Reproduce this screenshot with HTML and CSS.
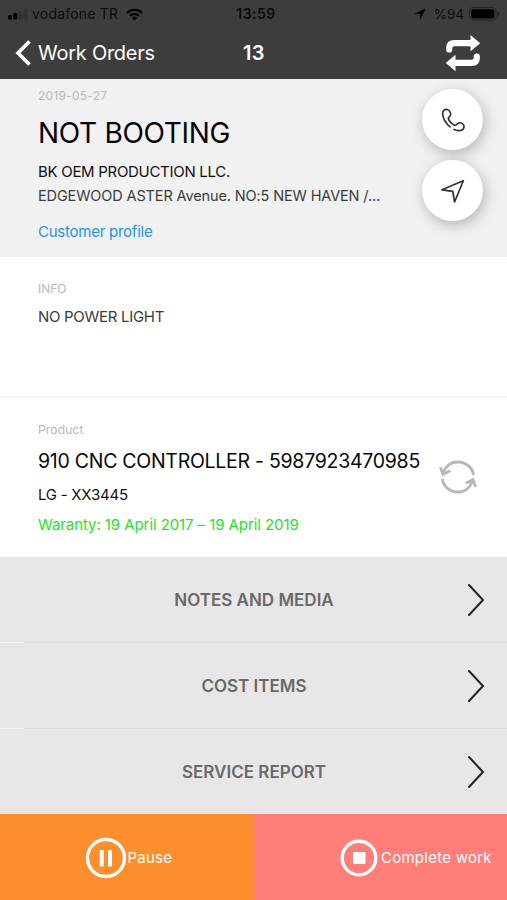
FILE: index.html
```html
<!DOCTYPE html>
<html lang="en">
<head>
<meta charset="utf-8">
<title>Work Order 13</title>
<link rel="stylesheet" href="styles.css">
</head>
<body>
<div class="screen">
  <header class="header">
    <div class="status">
      <div class="status-left">
        <svg class="signal" width="20" height="12" viewBox="0 0 20 12"><rect x="0" y="7" width="4" height="4.5" rx="1"/><rect x="5.2" y="5" width="4" height="6.5" rx="1"/><rect x="10.4" y="3" width="4" height="8.5" rx="1" opacity=".2"/><rect x="15.6" y="0.500" width="4" height="11" rx="1" opacity=".2"/></svg>
        <span class="carrier">vodafone TR</span>
        <svg class="wifi" width="17" height="13" viewBox="0 0 17 13"><g fill="none" stroke="#000" stroke-width="2.2"><path d="M1 4.900a10.500 10.500 0 0 1 15 0"/><path d="M3.900 7.900a6.500 6.500 0 0 1 9.200 0"/></g><path d="M8.500 12.600 5.900 9.900a3.700 3.700 0 0 1 5.200 0z"/></svg>
      </div>
      <span class="clock">13:59</span>
      <div class="status-right">
        <svg class="location" width="12" height="12" viewBox="0 0 12 12"><path d="M11.500.5 0 5.700h6.200V12z"/></svg>
        <span class="percent">%94</span>
        <svg class="battery" width="31" height="14" viewBox="0 0 31 14"><rect x=".6" y=".6" width="26.500" height="12.600" rx="3.200" fill="none" stroke="#000" stroke-opacity=".4"/><rect x="2.300" y="2.300" width="23" height="9.300" rx="1.800"/><path d="M28.500 4.500q2 .8 2 2.500t-2 2.500z" opacity=".5"/></svg>
      </div>
    </div>
    <nav class="nav">
      <a class="back">
        <svg width="17" height="28" viewBox="0 0 17 28"><path d="M14.500 2.500 3 14l11.500 11.500" fill="none" stroke="#fff" stroke-width="3.600"/></svg>
        <span class="back-label">Work Orders</span>
      </a>
      <h1 class="number">13</h1>
      <svg class="repeat" width="36" height="38" viewBox="0 0 36 38"><g fill="none" stroke="#fff" stroke-width="6.200" stroke-linecap="round"><path d="M4.200 15.500V14q0-4.800 5-4.800H25" /><path d="M31.800 22.500V24q0 4.800-5 4.800H11"/></g><path d="M25.500.9 35.200 9.200 25.500 17.300zM10.500 20.700.8 29l9.700 8.200z" fill="#fff"/></svg>
    </nav>
  </header>

  <section class="customer">
    <div class="label date">2019-05-27</div>
    <h2 class="title">NOT BOOTING</h2>
    <div class="company">BK OEM PRODUCTION LLC.</div>
    <div class="address">EDGEWOOD ASTER Avenue. NO:5 NEW HAVEN /...</div>
    <a class="profile">Customer profile</a>
    <div class="actions">
      <button class="round"><svg width="24" height="24" viewBox="0 0 24 24"><path d="M9.600 19.400C5.700 16.200 1.700 10.500 1.600 5.300 1.600 3 3.600 1.200 5.600 1.400 8 1.700 9.600 4.300 9.700 6.300c.1 2-2.700 2.600-2.300 4.500.5 2.300 3.900 5.800 6.100 6.400 2.100.5 2.700-2.100 4.700-2.400 2.200-.3 4.700 1.300 4.800 3.400.1 2.400-1.800 4.100-4.400 4.400-2.200.2-4.500-.4-6.200-1.500" /></svg></button>
      <button class="round"><svg width="24" height="24" viewBox="0 0 24 24"><path d="M22.300 1.700 1 10.800l10.800 1.600L13.600 23z"/></svg></button>
    </div>
  </section>

  <section class="info">
    <div class="label info-label">INFO</div>
    <div class="info-text">NO POWER LIGHT</div>
  </section>

  <section class="product">
    <div class="product-text">
      <div class="label product-label">Product</div>
      <div class="product-name">910 CNC CONTROLLER - 5987923470985</div>
      <div class="model">LG - XX3445</div>
      <div class="warranty">Waranty: 19 April 2017 – 19 April 2019</div>
    </div>
    <svg class="sync" width="38" height="34" viewBox="0 0 38 34"><g fill="none" stroke="#b7b7b7" stroke-width="2.900"><path d="M4 14C6 6.300 11.700 2 18.500 2 26.700 2 33.500 7.500 34.600 15"/><path d="M3.300 19C4.400 26.500 11 32 19 32c6.800 0 12.500-4.300 14.500-12"/><path d="M1.300 7.200 4 14.300l7.300-3.500M36.700 26.800 34 19.700l-7.300 3.500"/></g></svg>
  </section>

  <ul class="menu">
    <li class="row"><span class="row-label">NOTES AND MEDIA</span><svg class="chevron" width="18" height="34" viewBox="0 0 18 34"><path d="M2 2 16 17 2 32"/></svg></li>
    <li class="row"><span class="row-label">COST ITEMS</span><svg class="chevron" width="18" height="34" viewBox="0 0 18 34"><path d="M2 2 16 17 2 32"/></svg></li>
    <li class="row"><span class="row-label">SERVICE REPORT</span><svg class="chevron" width="18" height="34" viewBox="0 0 18 34"><path d="M2 2 16 17 2 32"/></svg></li>
  </ul>

  <footer class="footer">
    <button class="pause"><svg width="42" height="42" viewBox="0 0 42 42"><circle cx="21" cy="21" r="18.500" fill="none" stroke="#fff" stroke-width="3.400"/><path d="M14.700 13h4v16.500h-4zM23 13h4v16.500h-4z" fill="#fff"/></svg><span class="pause-label">Pause</span></button>
    <button class="complete"><svg width="38" height="38" viewBox="0 0 38 38"><circle cx="19" cy="19" r="16.800" fill="none" stroke="#fff" stroke-width="3.400"/><rect x="13" y="13" width="12.500" height="12" rx="1" fill="#fff"/></svg><span class="complete-label">Complete work</span></button>
  </footer>
</div>
</body>
</html>
```
FILE: styles.css
```css
* { box-sizing: border-box; }
body { margin: 0; font-family: Inter, "Liberation Sans", sans-serif; background: #fff; color: #111; }
.screen { width: 507px; height: 900px; overflow: hidden; display: flex; flex-direction: column; }
h1, h2, ul { margin: 0; padding: 0; font-weight: 400; }
svg { display: block; flex: none; }
button { border: 0; padding: 0; font: inherit; }
.screen div, .screen span, .screen a { white-space: nowrap; }

.header { height: 79px; flex: none; background: #3d3e3c; }
.status { height: 28px; display: grid; grid-template-columns: 1fr auto 1fr; align-items: center; padding: 0 7px 0 8px; color: #0b0b0b; font-size: 14px; line-height: 16px; }
.status-left, .status-right { display: flex; align-items: center; }
.status-right { justify-content: flex-end; }
.carrier { margin-left: 4px; width: 86px; letter-spacing: .2px; }
.wifi { margin-left: 8px; }
.clock { padding-left: 4px; font-weight: 600; letter-spacing: .5px; }
.percent { margin: 0 5px 0 8px; font-size: 13.5px; }
.nav { height: 49px; display: grid; grid-template-columns: 1fr auto 1fr; align-items: center; padding: 0 15px; color: #fff; }
.back { display: flex; align-items: center; gap: 6px; font-size: 20px; letter-spacing: -.25px; }
.number { font-size: 20px; font-weight: 600; line-height: 28px; letter-spacing: .5px; padding-left: 1px; }
.repeat { justify-self: end; margin-right: 11px; }

.customer { position: relative; height: 178px; flex: none; background: #f1f1f1; padding: 9px 38px 0; }
.label { font-size: 12px; line-height: 16px; color: #b9b9b9; }
.date { letter-spacing: .25px; }
.title { margin-top: 9px; font-size: 28px; line-height: 40px; letter-spacing: -.3px; color: #050505; }
.company { margin-top: 9px; font-size: 15px; line-height: 20px; letter-spacing: -.3px; }
.address { margin-top: 4px; font-size: 14.5px; line-height: 20px; letter-spacing: -.13px; color: #3b3b3b; }
.profile { display: block; margin-top: 16px; font-size: 15px; line-height: 20px; letter-spacing: -.25px; color: #2494ee; }
.actions { position: absolute; top: 10px; right: 24px; display: flex; flex-direction: column; gap: 10px; }
.round { width: 61px; height: 61px; border-radius: 50%; background: #fff; display: grid; place-items: center; box-shadow: 2px 4px 14px rgba(0, 0, 0, .25); }
.round path { fill: none; stroke: #333; stroke-width: 1.7; stroke-linejoin: round; }

.info { height: 141px; flex: none; padding: 24px 38px 0; border-bottom: 2px solid #f5f5f5; }
.info-text { margin-top: 10px; font-size: 15px; line-height: 20px; letter-spacing: -.3px; color: #3b3b3b; }

.product { height: 159px; flex: none; display: flex; justify-content: space-between; padding: 24px 30px 0 38px; }
.product-label { letter-spacing: .15px; }
.product-name { margin-top: 9px; font-size: 19.5px; line-height: 28px; letter-spacing: -.27px; color: #080808; }
.model { margin-top: 10px; font-size: 15px; line-height: 20px; letter-spacing: -.25px; }
.warranty { margin-top: 10px; font-size: 15px; line-height: 20px; letter-spacing: -.08px; color: #22e622; }
.sync { margin-top: 38px; }

.menu { list-style: none; height: 257px; flex: none; display: grid; grid-template-rows: 86px 86px 85px; background: #e7e7e7; }
.row { display: grid; grid-template-columns: 1fr auto 1fr; align-items: center; padding: 1px 22px 0 23px; border-bottom: 1px solid; border-image: linear-gradient(to right, #f3f3f3 25px, #dcdcdc 25px) 1; }
.row:last-child { border-image: none; border-color: #e7e7e7; }
.row-label { grid-column: 2; font-size: 17px; font-weight: 600; line-height: 24px; color: #696969; }
.chevron { justify-self: end; }
.chevron path { fill: none; stroke: #222; stroke-width: 2; stroke-linecap: round; }

.footer { height: 86px; flex: none; display: grid; grid-template-columns: 254px 1fr; color: #fff; font-size: 15px; line-height: 20px; letter-spacing: .25px; }
.pause, .complete { display: flex; align-items: center; color: #fff; letter-spacing: .25px; }
.pause { background: #fc8f2c; padding: 1px 0 0 85px; }
.pause-label { padding-left: .5px; }
.complete { background: #ff7e79; padding: 1px 0 0 86px; gap: 3px; }
```
